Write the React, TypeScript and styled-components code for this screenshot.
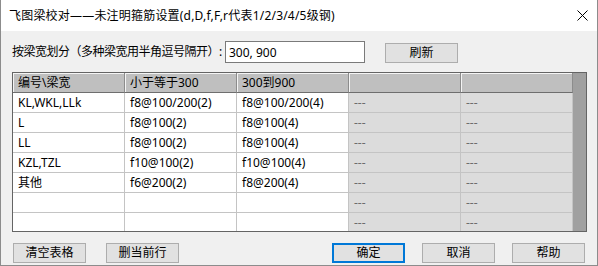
import styled, { createGlobalStyle } from "styled-components";

const GlobalStyle = createGlobalStyle`
  html, body {
    margin: 0;
    padding: 0;
    background: #f0f0f0;
  }
  body {
    font-family: "Noto Sans", "Noto Sans CJK SC", sans-serif;
    font-size: 12px;
    color: #000;
  }
`;

const Window = styled.div`
  width: 598px;
  height: 266px;
  box-sizing: border-box;
  border: 1px solid #8c8c8c;
  border-top: none;
  background: #f0f0f0;
  display: flex;
  flex-direction: column;
  overflow: hidden;
`;

const TitleBar = styled.div`
  height: 31px;
  flex: 0 0 31px;
  background: #fff;
  display: flex;
  align-items: center;
  justify-content: space-between;
  padding: 0 9px 0 8px;
`;

const Title = styled.span`
  font-size: 12px;
  line-height: 16px;
  letter-spacing: 0.2px;
  white-space: nowrap;
`;

const Body = styled.div`
  padding: 0 10px 2px 11px;
  display: flex;
  flex-direction: column;
`;

const FilterRow = styled.div`
  margin-top: 10px;
  height: 22px;
  display: flex;
  align-items: center;
`;

const Label = styled.span`
  width: 213px;
  min-width: 0;
  flex: 0 0 auto;
  white-space: nowrap;
  line-height: 16px;
  letter-spacing: -0.5px;
`;

const Input = styled.input`
  width: 140px;
  height: 22px;
  box-sizing: border-box;
  border: 1px solid #7a7a7a;
  background: #fff;
  padding: 0 3px;
  font: inherit;
  font-size: 12px;
  outline: none;
`;

const Button = styled.button<{ $primary?: boolean }>`
  width: 73px;
  height: 20px;
  box-sizing: border-box;
  padding: 0;
  background: #e1e1e1;
  border: ${(p) => (p.$primary ? "2px solid #0078d7" : "1px solid #adadad")};
  font-family: inherit;
  font-size: 12px;
  line-height: 16px;
  color: #000;
`;

const RefreshButton = styled(Button)`
  margin-left: 20px;
  margin-top: 1px;
`;

const TableBox = styled.div`
  margin-top: 9px;
  height: 160px;
  box-sizing: border-box;
  border: 1px solid #646464;
  display: flex;
  overflow: hidden;
`;

const Grid = styled.div`
  display: grid;
  grid-template-columns: repeat(5, 112px);
  grid-auto-rows: 20px;
  flex: 0 0 560px;
  align-content: start;
`;

const Filler = styled.div`
  flex: 1;
  background: #a0a0a0;
`;

const HeadCell = styled.div`
  box-sizing: border-box;
  background: #bfbfbf;
  border-right: 1px solid #8c8c8c;
  border-bottom: 1px solid #6e6e6e;
  box-shadow: inset 1px 1px 0 #f4f4f4;
  padding: 0 5px;
  line-height: 19px;
  white-space: nowrap;
  overflow: hidden;
`;

const Cell = styled.div<{ $locked?: boolean }>`
  box-sizing: border-box;
  background: ${(p) => (p.$locked ? "#dcdcdc" : "#fff")};
  color: ${(p) => (p.$locked ? "#6d6d6d" : "#000")};
  border-right: 1px solid #c4c4c4;
  border-bottom: 1px solid #c4c4c4;
  padding: 0 5px;
  line-height: 19px;
  white-space: nowrap;
  overflow: hidden;
`;

const Footer = styled.div`
  margin-top: 11px;
  display: flex;
  justify-content: space-between;
`;

const ButtonGroup = styled.div<{ $gap: number }>`
  display: flex;
  gap: ${(p) => p.$gap}px;
  padding: 0 2px 0 1px;
`;

const CloseIcon = () => (
  <svg width="11" height="11" viewBox="0 0 11 11">
    <path d="M0.5 0.5 L10.5 10.5 M10.5 0.5 L0.5 10.5" stroke="#000" strokeWidth="1" />
  </svg>
);

const headers = ["编号\\梁宽", "小于等于300", "300到900", "", ""];

const rows: string[][] = [
  ["KL,WKL,LLk", "f8@100/200(2)", "f8@100/200(4)"],
  ["L", "f8@100(2)", "f8@100(4)"],
  ["LL", "f8@100(2)", "f8@100(4)"],
  ["KZL,TZL", "f10@100(2)", "f10@100(4)"],
  ["其他", "f6@200(2)", "f8@200(4)"],
  ["", "", ""],
  ["", "", ""],
];

const App = () => {
  return (
    <>
      <GlobalStyle />
      <Window>
        <TitleBar>
          <Title>飞图梁校对——未注明箍筋设置(d,D,f,F,r代表1/2/3/4/5级钢)</Title>
          <CloseIcon />
        </TitleBar>
        <Body>
          <FilterRow>
            <Label>按梁宽划分（多种梁宽用半角逗号隔开）:</Label>
            <Input defaultValue="300, 900" />
            <RefreshButton>刷新</RefreshButton>
          </FilterRow>

          <TableBox>
            <Grid>
              {headers.map((h, i) => (
                <HeadCell key={i}>{h}</HeadCell>
              ))}
              {rows.map((r, ri) => [
                ...r.map((c, ci) => <Cell key={`${ri}-${ci}`}>{c}</Cell>),
                <Cell key={`${ri}-3`} $locked>---</Cell>,
                <Cell key={`${ri}-4`} $locked>---</Cell>,
              ])}
            </Grid>
            <Filler />
          </TableBox>

          <Footer>
            <ButtonGroup $gap={20}>
              <Button>清空表格</Button>
              <Button>删当前行</Button>
            </ButtonGroup>
            <ButtonGroup $gap={17}>
              <Button $primary>确定</Button>
              <Button>取消</Button>
              <Button>帮助</Button>
            </ButtonGroup>
          </Footer>
        </Body>
      </Window>
    </>
  );
};

export default App;
